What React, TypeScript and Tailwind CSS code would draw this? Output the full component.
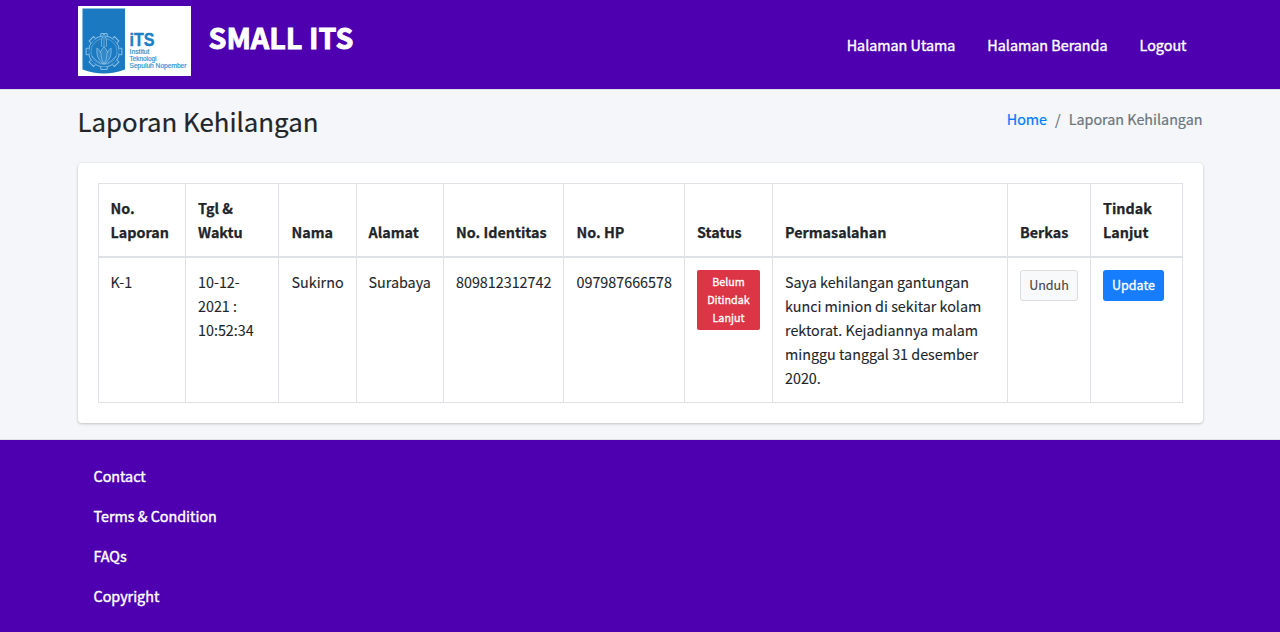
import React from "react";

const navLinks = ["Halaman Utama", "Halaman Beranda", "Logout"];
const footerLinks = ["Contact", "Terms & Condition", "FAQs", "Copyright"];

const columns = [
  { label: "No. Laporan", width: 87, pad: "pl-3" },
  { label: "Tgl & Waktu", width: 93, pad: "pl-[12.500px]" },
  { label: "Nama", width: 78, pad: "pl-[13px]" },
  { label: "Alamat", width: 87, pad: "pl-3" },
  { label: "No. Identitas", width: 120, pad: "pl-[12.500px]" },
  { label: "No. HP", width: 121, pad: "pl-[13px]" },
  { label: "Status", width: 88, pad: "pl-[12.500px]" },
  { label: "Permasalahan", width: 235, pad: "pl-[12.500px]" },
  { label: "Berkas", width: 83, pad: "pl-[12.500px]" },
  { label: "Tindak Lanjut", width: 92, pad: "pl-[12.500px]" },
];

function Logo() {
  const teeth = [0, 45, 90, 135, 180, 225, 270, 315];
  return (
    <svg width="113" height="70" viewBox="0 0 113 70" className="block shrink-0">
      <rect width="113" height="70" fill="#fff" />
      <path d="M4.5 2.5H47V63.500Q26 71.500 4.5 63.500Z" fill="#1b79c1" />
      <g fill="none" stroke="#8cc2e6" strokeWidth="1">
        <circle cx="26" cy="45.500" r="15.500" />
        <circle cx="26" cy="45.500" r="13" strokeWidth="0.5" />
        {teeth.map((a) => (
          <path key={a} d="M22.8 30.3V27.600H29.2V30.3" fill="#1b79c1" transform={`rotate(${a} 26 45.5)`} />
        ))}
        <path d="M24 41c-1.500-5 0-10 2-13 2 3 3.500 8 2 13" fill="#1b79c1" strokeWidth="0.800" />
        <path d="M19 42c-1 8 2 13 7 16 5-3 8-8 7-16-2 1.500-3 3-3.500 5-.5-3-1.500-4-3.500-6-2 2-3 3-3.500 6-.5-2-1.500-3.500-3.500-5Z" fill="#3288c9" strokeWidth="0.800" />
        <path d="M26 30v11M23 47q0 7 3 11 3-4 3-11M14 50c3 4 7 7 12 8 5-1 9-4 12-8" strokeWidth="0.700" />
      </g>
      <g fill="#1d80c5" fontFamily="'Liberation Sans', sans-serif">
        <text x="51.500" y="39.500" fontSize="17.500" fontWeight="700" textLength="25" lengthAdjust="spacingAndGlyphs" stroke="#1d80c5" strokeWidth="0.400">iTS</text>
        <g fontFamily="'Liberation Sans', sans-serif" fontSize="6.300" fill="#3a93cf" stroke="#3a93cf" strokeWidth="0.200">
          <text x="51.500" y="48" textLength="20" lengthAdjust="spacingAndGlyphs">Institut</text>
          <text x="51.500" y="55" textLength="27" lengthAdjust="spacingAndGlyphs">Teknologi</text>
          <text x="51.500" y="62" textLength="57" lengthAdjust="spacingAndGlyphs">Sepuluh Nopember</text>
        </g>
      </g>
    </svg>
  );
}

export default function App() {
  return (
    <div className="flex h-[632px] flex-col overflow-hidden bg-[#f4f6f9] font-['Noto_Sans_CJK_SC',sans-serif] text-[14.33px] leading-6 text-[#212529] [-webkit-text-stroke:0.1px]">
      <header className="h-[90px] shrink-0 border-b border-[#dee2e6] bg-[#4e00b1] text-white">
        <div className="mx-auto flex w-[1125px] items-start pt-1.5">
          <Logo />
          <h1 className="ml-[18px] mt-[11px] text-[28.7px] leading-10 font-bold [-webkit-text-stroke:0.9px]">SMALL ITS</h1>
          <nav className="mt-[27px] mr-4 ml-auto flex gap-8 [-webkit-text-stroke:0.4px]">
            {navLinks.map((l) => (
              <a key={l} href="#">{l}</a>
            ))}
          </nav>
        </div>
      </header>

      <main className="mx-auto h-[349px] w-[1125px] shrink-0">
        <div className="flex h-[73px] items-start justify-between">
          <h2 className="mt-[13px] text-[25.8px] leading-[35px] [-webkit-text-stroke:0.2px]">Laporan Kehilangan</h2>
          <ol className="mt-[17px] flex gap-2 text-[#6c757d] [-webkit-text-stroke:0.2px]">
            <li><a href="#" className="text-[#007bff]">Home</a></li>
            <li>/</li>
            <li>Laporan Kehilangan</li>
          </ol>
        </div>

        <section className="h-[260px] rounded bg-white p-5 shadow-[0_0_1px_rgba(0,0,0,.125),0_1px_3px_rgba(0,0,0,.2)]">
          <table className="w-[1085px] table-fixed border-collapse border border-[#dee2e6] text-left">
            <colgroup>
              {columns.map((c) => (
                <col key={c.label} style={{ width: c.width }} />
              ))}
            </colgroup>
            <thead>
              <tr>
                {columns.map((c) => (
                  <th key={c.label} className={`border border-b-2 border-[#dee2e6] py-3 pr-2 align-bottom font-bold [-webkit-text-stroke:0.25px] ${c.pad}`}>
                    {c.label}
                  </th>
                ))}
              </tr>
            </thead>
            <tbody>
              <tr className="align-top [&>td]:border [&>td]:border-[#dee2e6] [&>td]:py-3 [&>td]:pr-2">
                <td className="pl-3">K-1</td>
                <td className="pl-[12.500px]">10-12-<br />2021 :<br />10:52:34</td>
                <td className="pl-[13px]">Sukirno</td>
                <td className="pl-3">Surabaya</td>
                <td className="pl-[12.500px]">809812312742</td>
                <td className="pl-[13px]">097987666578</td>
                <td className="pl-3">
                  <button className="block h-[60px] w-[63px] rounded-xs bg-[#dc3545] py-[3px] pl-px text-[10.75px] leading-[18px] text-white [-webkit-text-stroke:0.3px]">
                    Belum Ditindak Lanjut
                  </button>
                </td>
                <td className="pl-[12.500px]">
                  Saya kehilangan gantungan<br />kunci minion di sekitar kolam<br />rektorat. Kejadiannya malam<br />minggu tanggal 31 desember<br />2020.
                </td>
                <td className="pl-3">
                  <button className="block h-[31px] w-[58px] rounded-[3px] border border-[#ddd] bg-[#f8f9fa] pb-[2px] pl-px text-[12.54px] leading-[21px] text-[#444]">
                    Unduh
                  </button>
                </td>
                <td className="pl-3">
                  <button className="block h-[31px] w-[61px] rounded-[3px] bg-[#177dff] pb-[2px] pl-px text-[12.54px] leading-[21px] text-white [-webkit-text-stroke:0.3px]">
                    Update
                  </button>
                </td>
              </tr>
            </tbody>
          </table>
        </section>
      </main>

      <footer className="flex-1 border-t border-[#dee2e6] bg-[#4e00b1] text-white">
        <ul className="mx-auto flex w-[1125px] flex-col gap-4 px-4 pt-6 [-webkit-text-stroke:0.4px]">
          {footerLinks.map((l) => (
            <li key={l}><a href="#">{l}</a></li>
          ))}
        </ul>
      </footer>
    </div>
  );
}
